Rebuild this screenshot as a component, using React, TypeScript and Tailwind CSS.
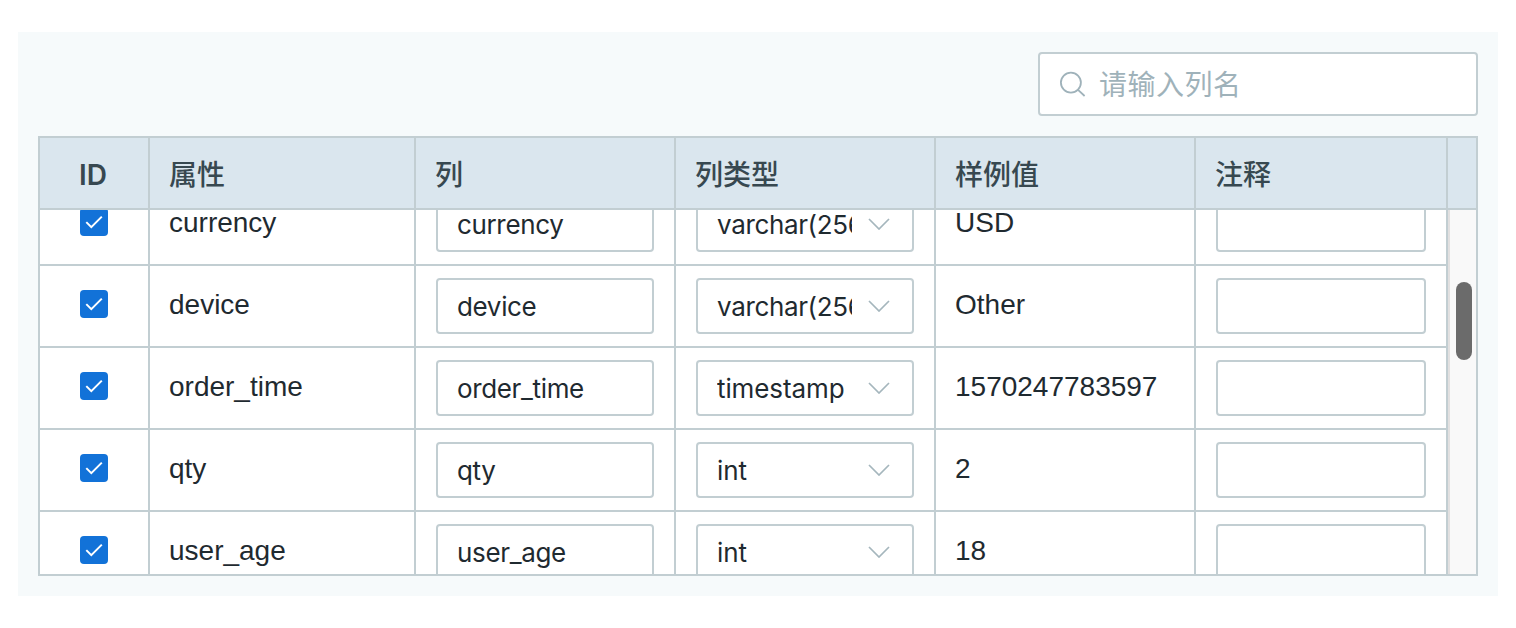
type Row = { name: string; type: string; sample: string };

const rows: Row[] = [
  { name: "currency", type: "varchar(256)", sample: "USD" },
  { name: "device", type: "varchar(256)", sample: "Other" },
  { name: "order_time", type: "timestamp", sample: "1570247783597" },
  { name: "qty", type: "int", sample: "2" },
  { name: "user_age", type: "int", sample: "18" },
];

const headings = ["属性", "列", "列类型", "样例值", "注释"];

function SearchIcon() {
  return (
    <svg className="size-7 shrink-0" viewBox="0 0 28 28" fill="none" stroke="#9fb2ba" strokeWidth="1.8">
      <circle cx="12.9" cy="12.6" r="10" />
      <path d="M19.8 19.6L26.6 26" />
    </svg>
  );
}

function Checkbox() {
  return (
    <span className="flex size-7 items-center justify-center rounded bg-[#1272d8]">
      <svg className="size-7" viewBox="0 0 28 28" fill="none" stroke="#fff" strokeWidth="2">
        <path d="M6.3 14.1L11.3 19.1L21.8 8.6" />
      </svg>
    </span>
  );
}

function Chevron() {
  return (
    <svg className="h-3 w-[22px] shrink-0" viewBox="0 0 22 12" fill="none" stroke="#a5b6bd" strokeWidth="1.7">
      <path d="M1 1L11 11L21 1" />
    </svg>
  );
}

function TableRow({ row }: { row: Row }) {
  return (
    <div className="grid h-[82px] shrink-0 grid-cols-[110px_266px_260px_260px_260px_252px] text-[28px] leading-8 text-[#1f2a30] *:border-r-2 *:border-b-2 *:border-[#c2ced2]">
      <div className="flex items-center justify-center pb-1">
        <Checkbox />
      </div>
      <div className="px-[19px] pt-[23px]">{row.name}</div>
      <div className="px-5 pt-3">
        <div className="h-14 rounded border-2 border-[#c2ced2] px-[19px] pt-[11px] font-[Inter,sans-serif] text-[26px] tracking-[-0.35px]">
          {row.name}
        </div>
      </div>
      <div className="px-5 pt-3">
        <div className="flex h-14 rounded border-2 border-[#c2ced2] pl-[19px] pt-[11px] font-[Inter,sans-serif] text-[26px] tracking-[-0.1px]">
          <span
            className={
              row.type.startsWith("varchar")
                ? "w-[135px] shrink-0 overflow-hidden whitespace-nowrap tracking-[-0.35px]"
                : "w-[135px] shrink-0 overflow-hidden whitespace-nowrap"
            }
          >
            {row.type}
          </span>
          <span className="ml-4 pt-[9px]">
            <Chevron />
          </span>
        </div>
      </div>
      <div className="px-[19px] pt-[23px]">{row.sample}</div>
      <div className="px-5 pt-3">
        <div className="h-14 rounded border-2 border-[#c2ced2]" />
      </div>
    </div>
  );
}

export default function App() {
  return (
    <div className="h-[628px] bg-white px-[18px] pt-8 font-['Liberation_Sans','Noto_Sans_CJK_SC',sans-serif]">
      <div className="flex h-[564px] flex-col gap-5 bg-[#f6fafb] p-5">
        <div className="flex h-16 w-[440px] shrink-0 items-center self-end rounded border-2 border-[#c2ced2] bg-white pl-[18px] text-[28px] text-[#9fb2ba]">
          <SearchIcon />
          <span className="ml-[13px] pt-1 leading-10 tracking-[0.5px]">请输入列名</span>
        </div>
        <div className="flex h-[440px] flex-col border-2 border-[#c2ced2] bg-white">
          <div className="grid h-[72px] shrink-0 grid-cols-[110px_266px_260px_260px_260px_252px_1fr] border-b-2 border-[#c2ced2] bg-[#dae6ee] text-[28px] font-medium leading-[70px] text-[#374850]">
            <div className="border-r-2 border-[#c2ced2] pt-0.5 pr-0.5 text-center font-[Inter,sans-serif] font-semibold">
              ID
            </div>
            {headings.map((heading) => (
              <div
                key={heading}
                className="border-r-2 border-[#c2ced2] pl-[19px] font-['Noto_Sans_CJK_SC',sans-serif]"
              >
                {heading}
              </div>
            ))}
          </div>
          <div className="flex min-h-0 flex-1 overflow-hidden">
            <div className="-mt-[26px] flex flex-col">
              {rows.map((row) => (
                <TableRow key={row.name} row={row} />
              ))}
            </div>
            <div className="flex flex-1 justify-center border-l-2 border-[#e2e0e0] bg-[#f9f9f9] pt-[72px] pl-[2px]">
              <div className="h-[78px] w-4 rounded-full bg-[#6b6b6b]" />
            </div>
          </div>
        </div>
      </div>
    </div>
  );
}
